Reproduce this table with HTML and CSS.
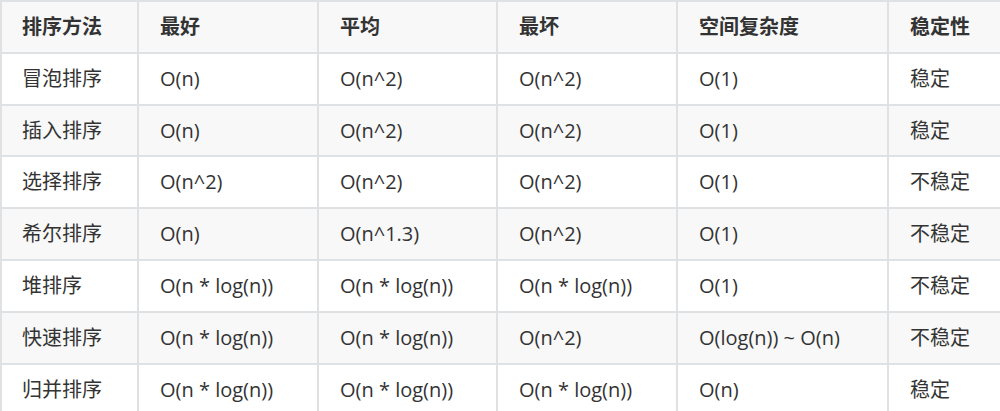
FILE: index.html
```html
<!DOCTYPE html>
<html lang="zh-CN">
<head>
<meta charset="utf-8">
<link rel="stylesheet" href="styles.css">
</head>
<body>
<table class="sort-table">
  <colgroup>
    <col class="c1"><col class="c2"><col class="c3"><col class="c4"><col class="c5"><col class="c6">
  </colgroup>
  <thead>
    <tr><th>排序方法</th><th>最好</th><th>平均</th><th>最坏</th><th>空间复杂度</th><th>稳定性</th></tr>
  </thead>
  <tbody>
    <tr><td>冒泡排序</td><td>O(n)</td><td>O(n^2)</td><td>O(n^2)</td><td>O(1)</td><td>稳定</td></tr>
    <tr><td>插入排序</td><td>O(n)</td><td>O(n^2)</td><td>O(n^2)</td><td>O(1)</td><td>稳定</td></tr>
    <tr><td>选择排序</td><td>O(n^2)</td><td>O(n^2)</td><td>O(n^2)</td><td>O(1)</td><td>不稳定</td></tr>
    <tr><td>希尔排序</td><td>O(n)</td><td>O(n^1.3)</td><td>O(n^2)</td><td>O(1)</td><td>不稳定</td></tr>
    <tr><td>堆排序</td><td>O(n * log(n))</td><td>O(n * log(n))</td><td>O(n * log(n))</td><td>O(1)</td><td>不稳定</td></tr>
    <tr><td>快速排序</td><td>O(n * log(n))</td><td>O(n * log(n))</td><td>O(n^2)</td><td>O(log(n)) ~ O(n)</td><td>不稳定</td></tr>
    <tr><td>归并排序</td><td>O(n * log(n))</td><td>O(n * log(n))</td><td>O(n * log(n))</td><td>O(n)</td><td>稳定</td></tr>
  </tbody>
</table>
</body>
</html>
```
FILE: styles.css
```css
html, body {
  margin: 0;
  padding: 0;
  background: #ffffff;
}
body {
  font-family: "Open Sans", "Noto Sans CJK SC", sans-serif;
  font-size: 20px;
  color: #333333;
  overflow: hidden;
}
.sort-table {
  border-collapse: collapse;
  table-layout: fixed;
  width: 1000px;
}
.c1 { width: 137px; }
.c2 { width: 180px; }
.c3 { width: 179px; }
.c4 { width: 180px; }
.c5 { width: 211px; }
.c6 { width: 113px; }
.sort-table th,
.sort-table td {
  border: 2px solid #dfe2e5;
  padding: 0 0 0 21px;
  height: 49.83px;
  text-align: left;
  white-space: nowrap;
  line-height: 24px;
}
.sort-table th:first-child,
.sort-table td:first-child {
  padding-left: 20px;
}
.sort-table th {
  font-weight: bold;
  color: #333333;
}
.sort-table thead tr {
  background: #f8f8f8;
}
.sort-table tbody tr:nth-child(2n) {
  background: #f8f8f8;
}
```
